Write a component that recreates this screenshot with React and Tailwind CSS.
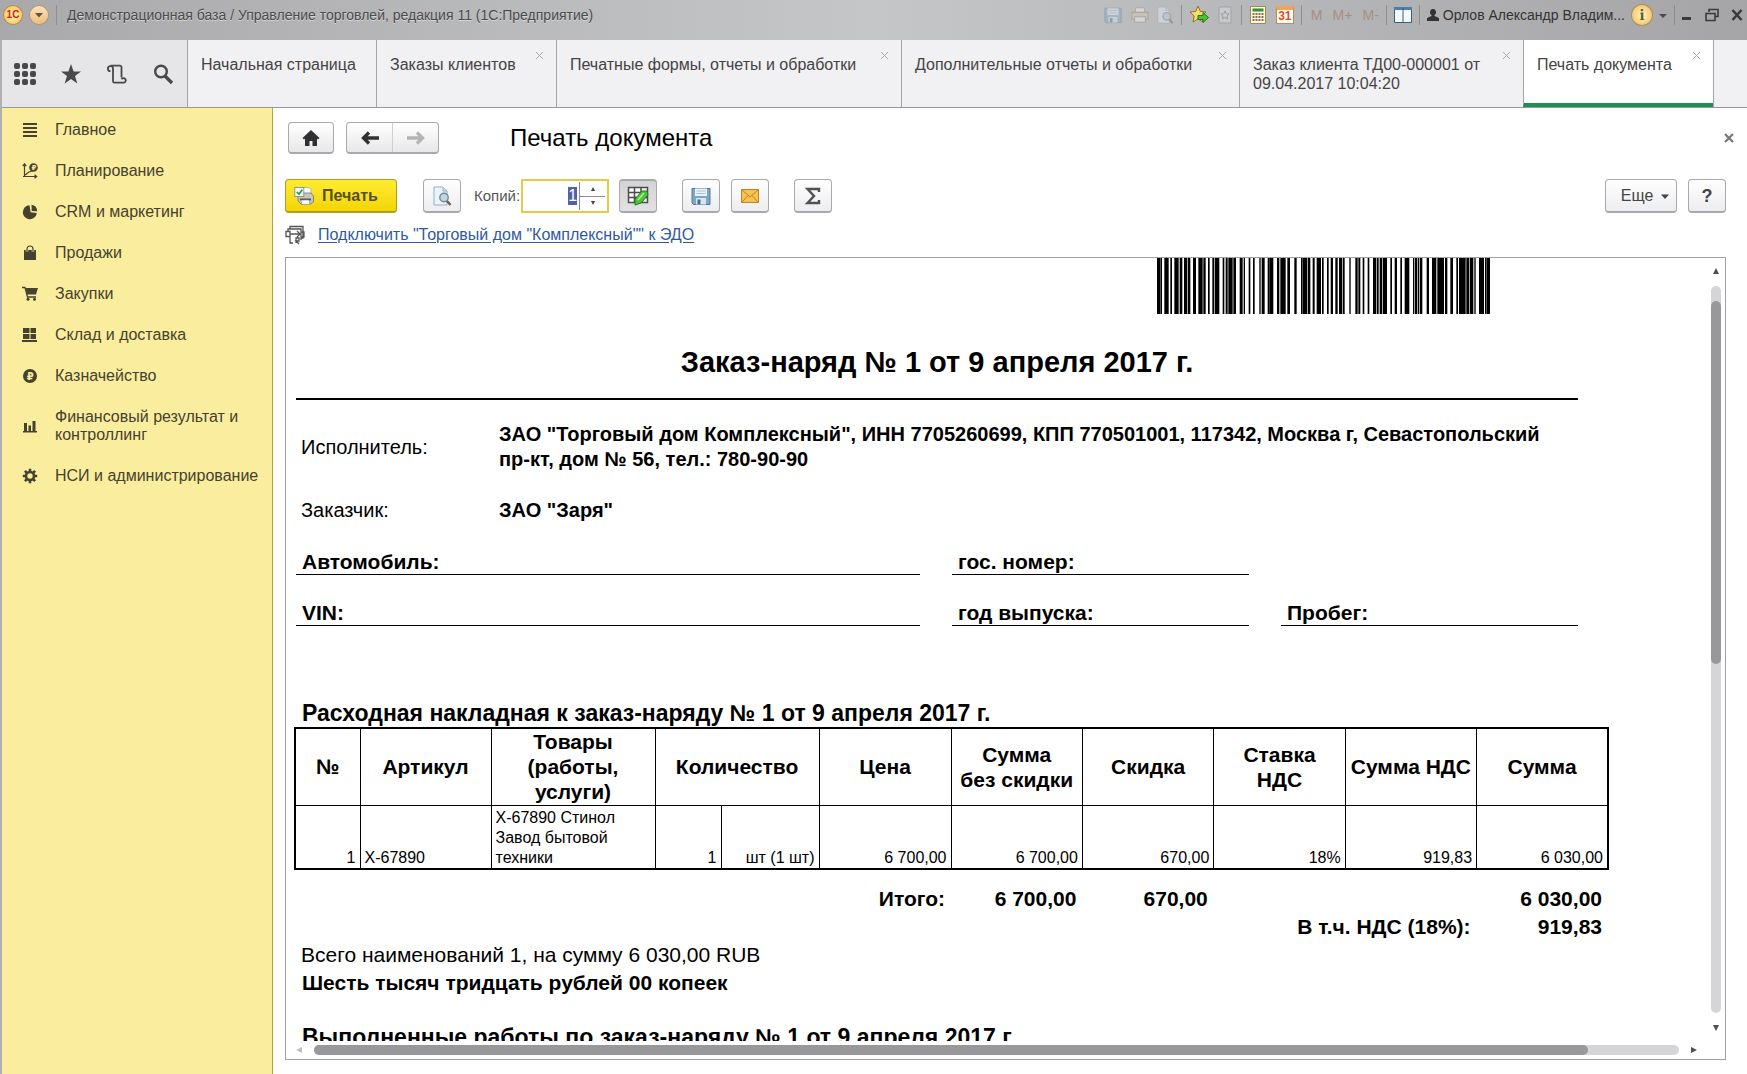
import React, { useEffect, useRef } from 'react';

const tabs = [
  { title: 'Начальная страница', width: 'w-[189px]' },
  { title: 'Заказы клиентов', width: 'w-[180px]', closable: true },
  { title: 'Печатные формы, отчеты и обработки', width: 'w-[345px]', closable: true },
  { title: 'Дополнительные отчеты и обработки', width: 'w-[338px]', closable: true },
  { title: 'Заказ клиента ТД00-000001 от 09.04.2017 10:04:20', width: 'w-[284px]', closable: true },
  { title: 'Печать документа', width: 'w-[190px]', closable: true, active: true },
];

// [start, end] of every bar, in thirds of a pixel
const bars = [
  [0, 8], [10, 14], [22, 34], [40, 44], [52, 64], [68, 75], [81, 90], [93, 99], [108, 116], [124, 136],
  [139, 145], [153, 157], [166, 170], [173, 186], [197, 201], [206, 211], [214, 226], [229, 236], [248, 256],
  [260, 263], [275, 279], [288, 292], [307, 310], [314, 322], [332, 336], [337, 348], [360, 366], [370, 385],
  [391, 398], [412, 418], [432, 436], [438, 450], [453, 459], [467, 472], [479, 491], [495, 499], [510, 514],
  [521, 527], [535, 541], [546, 554], [557, 562], [577, 580], [595, 601], [604, 609], [617, 621], [632, 636],
  [648, 656], [659, 664], [668, 675], [678, 689], [700, 704], [713, 719], [730, 734], [743, 756], [768, 771],
  [774, 780], [783, 786], [789, 795], [809, 815], [825, 837], [841, 860], [864, 870], [880, 887], [898, 902],
  [906, 925], [928, 936], [939, 948], [952, 955], [966, 980], [984, 988], [990, 998],
];

const columns = [
  { title: '№', span: 1 },
  { title: 'Артикул', span: 1 },
  { title: 'Товары (работы, услуги)', span: 1 },
  { title: 'Количество', span: 2 },
  { title: 'Цена', span: 1 },
  { title: 'Сумма без\u00a0скидки', span: 1 },
  { title: 'Скидка', span: 1 },
  { title: 'Ставка НДС', span: 1 },
  { title: 'Сумма НДС', span: 1 },
  { title: 'Сумма', span: 1 },
];

const rows = [
  ['1', 'X-67890', 'X-67890 Стинол Завод бытовой техники', '1', 'шт (1 шт)', '6 700,00', '6 700,00', '670,00', '18%', '919,83', '6 030,00'],
];

const Icon = ({ children, className = 'size-4', box = '0 0 16 16' }) => (
  <svg viewBox={box} className={`shrink-0 ${className}`} fill="currentColor" aria-hidden="true">
    {children}
  </svg>
);

const FloppyIcon = ({ className }) => (
  <Icon className={className} box="0 0 20 20">
    <path d="M1 2.5h18v16H2.5L1 17z" fill="#7fa6c4" stroke="#4f7d9e" />
    <rect x="4" y="2.5" width="12" height="7.500" fill="#eaf3fa" />
    <path d="M5.500 5h9M5.500 7.500h9" stroke="#a9c3d6" />
    <rect x="5" y="12" width="10" height="6.500" fill="#d7e6f1" />
    <rect x="6.500" y="13.500" width="3" height="5" fill="#4c6f8c" />
  </Icon>
);

const PrinterIcon = ({ className }) => (
  <Icon className={className} box="0 0 20 20">
    <path d="M8 1.500h7l2 2V9H8z" fill="#fff" stroke="#a8a8a0" strokeWidth=".8" />
    <path d="M4 9l3-2h10l2.500 3v6L16 18H7l-3-3z" fill="#c9c6bb" stroke="#77746a" strokeWidth=".8" />
    <path d="M6 12.500h11v2H6z" fill="#57544c" />
    <path d="M7 14h8l1 4.500H8z" fill="#fff" stroke="#888" strokeWidth=".6" />
    <rect x=".8" y="1.500" width="9" height="9" fill="#f4fbf4" stroke="#7c93a0" strokeWidth=".9" />
    <path d="M2.800 6l2.200 2.200L8.200 3.800" fill="none" stroke="#2f9a3b" strokeWidth="1.700" />
  </Icon>
);

const PreviewIcon = ({ className }) => (
  <Icon className={className} box="0 0 20 20">
    <path d="M2 1h9l4 4v14H2z" fill="#eaf3fa" stroke="#8fb1c8" />
    <path d="M11 1v4h4" fill="#cfe0ec" stroke="#8fb1c8" />
    <circle cx="12" cy="11.500" r="4.200" fill="#bcd7ea" stroke="#7d8791" strokeWidth="1.400" />
    <path d="M15 15l3.500 4" stroke="#7a5a3c" strokeWidth="2.400" />
  </Icon>
);

const menu = [
  {
    title: 'Главное',
    icon: <Icon><path d="M1 1h14v2H1zM1 5h14v2H1zM1 9h14v2H1zM1 13h14v2H1z" /></Icon>,
  },
  {
    title: 'Планирование',
    icon: (
      <Icon>
        <path d="M2.500 1v13M1 13.500h13M.7 3.200L2.500.8l1.800 2.400M12.500 11.700l2.200 1.800-2.200 1.800M3 12l4-3 3-1 3-2" fill="none" stroke="currentColor" strokeWidth="1.200" />
        <circle cx="11.500" cy="4.500" r="4.300" />
        <text x="9.400" y="7.300" fontSize="7" fill="#fbed9e" fontFamily="DejaVu Sans" fontWeight="bold">₽</text>
      </Icon>
    ),
  },
  {
    title: 'CRM и маркетинг',
    icon: <Icon><path d="M7.500 1.200A7 7 0 1 0 14.800 9L8.600 8.300z" /><path d="M9.500.8l.2 6.200 5.500.3A6.700 6.700 0 0 0 9.500.8z" /></Icon>,
  },
  {
    title: 'Продажи',
    icon: (
      <Icon>
        <path d="M2 5h12v10H2z" />
        <path d="M5 7V4a3 3 0 0 1 6 0v3" fill="none" stroke="#fbed9e" strokeWidth="2.400" />
        <path d="M5 7V4a3 3 0 0 1 6 0v3" fill="none" stroke="currentColor" strokeWidth="1.200" />
      </Icon>
    ),
  },
  {
    title: 'Закупки',
    icon: (
      <Icon>
        <path d="M3.500 2H16l-2 6.500H5.200z" />
        <path d="M0 1.500h3l2.500 9.500H14" fill="none" stroke="currentColor" strokeWidth="1.300" />
        <circle cx="6" cy="13.300" r="1.500" /><circle cx="12.500" cy="13.300" r="1.500" />
      </Icon>
    ),
  },
  {
    title: 'Склад и доставка',
    icon: <Icon><path d="M1 1h6.500v5H1zM8.500 1H14v5H8.500zM1 7h6.500v5H1zM8.500 7H14v5H8.500zM0 13h15v2H0z" /></Icon>,
  },
  {
    title: 'Казначейство',
    icon: (
      <Icon>
        <circle cx="8" cy="8" r="7" />
        <text x="4.800" y="11.800" fontSize="10" fill="#fbed9e" fontFamily="DejaVu Sans" fontWeight="bold">₽</text>
      </Icon>
    ),
  },
  {
    title: 'Финансовый результат и контроллинг',
    icon: <Icon><path d="M2 5h3v8H2zM6.500 7.500h2.500V13H6.500zM10.500 3h3v10h-3zM1 13h14v1.500H1z" /></Icon>,
  },
  {
    title: 'НСИ и администрирование',
    icon: (
      <Icon>
        <circle cx="8" cy="8" r="4" fill="none" stroke="currentColor" strokeWidth="2.600" />
        <path d="M8 .8v3M8 12.200v3M.8 8h3M12.200 8h3M2.900 2.900l2 2M11.100 11.100l2 2M2.900 13.100l2-2M11.100 4.900l2-2" stroke="currentColor" strokeWidth="2.600" />
      </Icon>
    ),
  },
];

const Divider = () => <span className="h-5 w-px bg-[#8f8f91]" />;

const TitleBar = () => (
  <header className="flex h-10 items-start bg-linear-to-r from-[#a9a9ab] via-[#c5c6c8] to-[#a5a5a7] pt-[3px] text-sm text-[#4a4a4c]">
    <div className="flex h-6 items-center gap-2 pl-1">
      <button aria-label="1С" className="flex size-[18px] items-center justify-center rounded-full bg-radial from-[#fff3b0] to-[#f6bf3a] text-[10px] font-bold text-[#d3201c] ring-1 ring-[#b98a4a]">1С</button>
      <button aria-label="Меню" className="flex size-[18px] items-center justify-center rounded-full bg-linear-to-b from-[#fbe3c0] to-[#eebc7e] text-[#6b5130] ring-1 ring-[#b99468]">
        <Icon className="size-2.5" box="0 0 10 10"><path d="M1 3h8L5 7.500z" /></Icon>
      </button>
      <Divider />
    </div>
    <h1 className="ml-2.5 flex h-6 min-w-0 flex-1 items-center truncate text-shadow-[0_1px_0_#d6d6d8]">
      Демонстрационная база / Управление торговлей, редакция 11 (1С:Предприятие)
    </h1>
    <div className="flex h-6 items-center gap-[7px]">
      <button aria-label="Сохранить" className="opacity-40"><FloppyIcon className="size-[18px]" /></button>
      <button aria-label="Печать" className="ml-0.5 opacity-40">
        <Icon className="size-[18px]" box="0 0 20 20">
          <path d="M5 2h10v5H5z" fill="#fff" stroke="#a08c70" />
          <path d="M1 7h18v8H1z" fill="#dcc9a8" stroke="#8e7858" />
          <path d="M4 12h12v6H4z" fill="#fff" stroke="#8e7858" />
        </Icon>
      </button>
      <button aria-label="Просмотр" className="opacity-40"><PreviewIcon className="size-[18px]" /></button>
      <Divider />
      <button aria-label="В избранное">
        <Icon className="size-5" box="0 0 20 20">
          <path d="M9 1l2.300 5.400 5.700.6-4.300 4 1.300 6L9 13.900 4 17l1.200-6L1 7l5.700-.6z" fill="#f8dc6a" stroke="#8d7422" />
          <path d="M9 10.500h5V7.500l5.500 5-5.500 5v-3H9z" fill="#4fbd35" stroke="#23741a" />
        </Icon>
      </button>
      <button aria-label="Избранное" className="opacity-40">
        <Icon className="size-[18px]" box="0 0 18 18">
          <path d="M3 1h12v16H3z" fill="#e2e4e6" stroke="#7c868d" />
          <path d="M9 5l1.200 2.700 3 .3-2.200 2 .6 3L9 11.500 6.400 13 7 10 4.800 8l3-.3z" fill="none" stroke="#6a747b" />
        </Icon>
      </button>
      <Divider />
      <button aria-label="Калькулятор">
        <Icon className="size-[18px]" box="0 0 18 18">
          <path d="M1.500.5h15v17h-15z" fill="#fdf6dc" stroke="#a08a50" />
          <path d="M3.500 2.500h11v3h-11z" fill="#35913c" />
          <path d="M3.500 8h11M3.500 11h11M3.500 14h11" stroke="#5b4a30" strokeWidth="1.600" strokeDasharray="2 1" />
        </Icon>
      </button>
      <button aria-label="Календарь" className="ml-0.5 flex h-[18px] w-[18px] flex-col items-center border border-[#c08a58] border-t-4 border-t-[#f0a45c] bg-[#fffdf6] text-[12px] leading-[13px] font-bold text-[#e0501c]">
        31
      </button>
      <Divider />
      <div className="flex w-[70px] justify-between pl-0.5 text-[#a8907f]">
        <button>M</button>
        <button>M+</button>
        <button>M-</button>
      </div>
      <Divider />
      <button aria-label="Панели">
        <Icon className="size-[18px]" box="0 0 18 18">
          <path d="M.5 1.500h17v15H.5z" fill="#f4f9fd" stroke="#35607f" />
          <path d="M0 1h18v3H0z" fill="#4b80a8" />
          <path d="M9 2v15" stroke="#35607f" />
        </Icon>
      </button>
      <Divider />
      <button className="flex items-center gap-1 text-[#333]">
        <Icon className="size-3" box="0 0 12 12">
          <path d="M6 0a3 3.200 0 0 1 1.500 6v1L12 9v3H0V9l4.500-2V6A3 3.200 0 0 1 6 0z" />
        </Icon>
        Орлов Александр Владим...
      </button>
      <button aria-label="О программе" className="flex size-5 items-center justify-center rounded-full bg-radial from-[#fff6c8] to-[#f0b640] font-serif text-base leading-4 font-bold text-[#5c5c2c] ring-1 ring-[#b08d50]">i</button>
      <button aria-label="Еще"><Icon className="size-2" box="0 0 8 8"><path d="M0 3h8L4 7z" /></Icon></button>
      <Divider />
    </div>
    <div className="flex h-6 items-center gap-3 pr-1 pl-1.5 text-[#3a3a3c]">
      <button aria-label="Свернуть"><Icon className="size-3" box="0 0 12 12"><path d="M1 8h9v3H1z" /></Icon></button>
      <button aria-label="Восстановить">
        <Icon className="size-3.5" box="0 0 14 14">
          <path d="M4 4V1.500h9v7h-3M1 5.500h9v7H1z" fill="none" stroke="currentColor" strokeWidth="1.600" />
        </Icon>
      </button>
      <button aria-label="Закрыть">
        <Icon className="size-3" box="0 0 12 12"><path d="M1.500 1l9 10M10.500 1l-9 10" stroke="currentColor" strokeWidth="2.600" /></Icon>
      </button>
    </div>
  </header>
);

const TabBar = () => (
  <nav className="flex h-[68px] border-b border-[#98989a] bg-[#f1f0f2] text-[#444]">
    <div className="flex w-[185px] shrink-0 items-center justify-between bg-[#e6e5e8] pr-[13px] pl-3 text-[#48484a]">
      <button aria-label="Меню функций">
        <Icon className="size-[22px]" box="0 0 22 22">
          {[0, 1, 2].map((r) => [0, 1, 2].map((c) => (
            <rect key={`${r}${c}`} x={c * 8} y={r * 8} width="6" height="6" rx="2" />
          )))}
        </Icon>
      </button>
      <button aria-label="Избранное">
        <Icon className="size-[22px]" box="0 0 22 22"><path d="M11 1l2.600 7.400h7.400l-6 4.600 2.300 7.500L11 16l-6.300 4.500L7 13 1 8.400h7.400z" /></Icon>
      </button>
      <button aria-label="История">
        <Icon className="size-[22px]" box="0 0 22 22">
          <path d="M4.500 8.200a2.600 2.600 0 1 1 2.500-3.300V18.500M4.500 2.600h9.500a1.500 1.500 0 0 1 1.500 1.500V14.500M7 18.300a1.500 1.500 0 0 0 1.500 1.400H18a2.300 2.300 0 1 0-2.500-3.400" fill="none" stroke="currentColor" strokeWidth="1.800" />
        </Icon>
      </button>
      <button aria-label="Поиск">
        <Icon className="size-[22px]" box="0 0 22 22">
          <circle cx="9" cy="8.500" r="5.800" fill="none" stroke="currentColor" strokeWidth="2.400" />
          <path d="M13 13l7 7" stroke="currentColor" strokeWidth="3.400" />
        </Icon>
      </button>
    </div>
    {tabs.map((tab) => (
      <div
        key={tab.title}
        className={`flex shrink-0 items-start justify-between border-l border-[#a4a4a6] pt-[15px] pl-[13px] ${tab.width} ${tab.active ? 'border-b-4 border-b-[#1f8f56] bg-white' : ''}`}
      >
        <a href="#" className="flex-1 leading-[19px]">{tab.title}</a>
        {tab.closable && (
          <button aria-label="Закрыть вкладку" className="mr-3 -mt-1 text-[#a8a8aa]">
            <Icon className="size-[9px]" box="0 0 9 9"><path d="M1 1l7 7M8 1L1 8" stroke="currentColor" /></Icon>
          </button>
        )}
      </div>
    ))}
    <div className="border-l border-[#a4a4a6]" />
  </nav>
);

const Sidebar = () => (
  <aside className="w-[271px] shrink-0 border-r border-[#b3a93f] bg-[#fbed9e] pt-[13px]">
    <ul className="flex flex-col gap-[23px]">
      {menu.map((item) => (
        <li key={item.title}>
          <a href="#" className="flex items-center gap-[17px] pr-3 pl-5 leading-[18px] text-[#45422f]">
            {item.icon}
            <span>{item.title}</span>
          </a>
        </li>
      ))}
    </ul>
  </aside>
);

const ToolButton = ({ label, children, className = 'w-[38px] h-[34px] from-white to-[#ededf0]' }) => (
  <button
    aria-label={label}
    className={`flex items-center justify-center rounded border border-[#a9a9ad] border-b-2 bg-linear-to-b text-[#444] ${className}`}
  >
    {children}
  </button>
);

const Toolbar = () => {
  const copies = useRef(null);

  useEffect(() => {
    copies.current.focus();
    copies.current.select();
  }, []);

  return (
    <div className="mt-[25px] flex items-center">
      <button className="flex h-[34px] w-28 items-center gap-2 rounded border border-b-2 border-[#b09c20] bg-linear-to-b from-[#ffec2e] to-[#f3d500] pl-2 font-bold text-[#57501a]">
        <PrinterIcon className="size-5" />
        Печать
      </button>
      <div className="ml-[26px] flex items-center">
        <ToolButton label="Предварительный просмотр"><PreviewIcon className="size-5" /></ToolButton>
        <label htmlFor="copies" className="ml-[13px] text-[15px] text-[#555]">Копий:</label>
        <div className="ml-px flex h-[34px] w-[88px] items-center border-2 border-[#e6cb4a] bg-white pr-0.5">
          <input
            id="copies"
            ref={copies}
            defaultValue="1"
            className="h-7 w-0 flex-1 pr-0.5 text-right outline-none selection:bg-[#5161a8] selection:text-white"
          />
          <div className="flex h-7 w-[26px] flex-col border-l border-[#8c8c90] text-[#444]">
            <button aria-label="Больше" className="flex flex-1 items-center justify-center border-b border-[#8c8c90]">
              <Icon className="size-1" box="0 0 4 4"><path d="M0 4h4L2 0z" /></Icon>
            </button>
            <button aria-label="Меньше" className="flex flex-1 items-center justify-center">
              <Icon className="size-1" box="0 0 4 4"><path d="M0 0h4L2 4z" /></Icon>
            </button>
          </div>
        </div>
      </div>
      <div className="ml-2.5 flex items-center">
        <ToolButton label="Редактирование" className="h-[34px] w-[38px] border-t-2 from-[#d4d4d6] to-[#e2e2e4]">
          <Icon className="size-[22px]" box="0 0 22 22">
            <path d="M1.500 2.500h19v15h-19zM1.500 7.500h19M1.500 12.500h19M7.500 2.500v15M14 2.500v15" fill="#fafafa" stroke="#4c4c4e" strokeWidth="1.500" />
            <path d="M8 14l7-8h5l1 4-7 8-6 2z" fill="#4cc436" stroke="#1d7f1c" />
            <path d="M11 15l6-7" stroke="#b9f09c" strokeWidth="1.500" />
          </Icon>
        </ToolButton>
        <span className="w-[25px]" />
        <ToolButton label="Сохранить"><FloppyIcon className="size-5" /></ToolButton>
        <span className="w-[11px]" />
        <ToolButton label="Отправить">
          <Icon className="h-3.5 w-[18px]" box="0 0 18 14">
            <path d="M.5.5h17v13H.5z" fill="#f6c250" stroke="#bd8420" />
            <path d="M1 1l8 7 8-7M1 13l6-6.500M17 13l-6-6.500" fill="none" stroke="#bd8420" />
          </Icon>
        </ToolButton>
        <span className="w-[25px]" />
        <ToolButton label="Сумма">
          <Icon className="size-[18px]" box="0 0 18 18">
            <path d="M15 5V2H3.500L10 9l-6.500 7H15v-3" fill="none" stroke="#505052" strokeWidth="2.400" />
          </Icon>
        </ToolButton>
      </div>
      <div className="ml-auto flex items-center gap-[11px]">
        <ToolButton label="Еще" className="h-[34px] w-[72px] gap-2 from-white to-[#ededf0] pl-2">
          Еще
          <Icon className="size-2" box="0 0 8 8"><path d="M0 2.500h8L4 7z" /></Icon>
        </ToolButton>
        <ToolButton label="Справка"><span className="text-lg font-bold">?</span></ToolButton>
      </div>
    </div>
  );
};

const Field = ({ label }) => (
  <div className="border-b border-black pl-1.5 text-[21px] leading-[25px] font-bold">{label}</div>
);

const Party = ({ label, children }) => (
  <div className="flex items-center pr-5 pl-[5px]">
    <span className="w-[198px] shrink-0">{label}</span>
    <b>{children}</b>
  </div>
);

const InvoiceTable = () => (
  <table className="-ml-0.5 w-[1315px] table-fixed border-collapse text-[21px] leading-[25px]">
    <colgroup>
      <col className="w-[65px]" />
      <col className="w-[131px]" />
      <col className="w-[164px]" />
      <col className="w-[66px]" />
      <col className="w-[98px]" />
      <col className="w-[132px]" />
      <col span={5} />
    </colgroup>
    <thead className="border-2 border-b border-black">
      <tr>
        {columns.map((column) => (
          <th key={column.title} colSpan={column.span} className="border border-black px-1 pt-0 pb-px">{column.title}</th>
        ))}
      </tr>
    </thead>
    <tbody className="border-2 border-t border-black text-base leading-5">
      {rows.map((row) => (
        <tr key={row[0]}>
          {row.map((value, i) => (
            <td key={i} className={`border border-black px-1 pt-0.5 pb-0 align-bottom ${i === 1 || i === 2 ? 'text-left' : 'text-right'}`}>
              {value}
            </td>
          ))}
        </tr>
      ))}
    </tbody>
    <tfoot className="text-right font-bold">
      <tr>
        <td colSpan={6} className="pt-4 pr-1.5">Итого:</td>
        <td className="pt-4 pr-1.5">6 700,00</td>
        <td className="pt-4 pr-1.5">670,00</td>
        <td colSpan={3} className="pt-4 pr-1.5">6 030,00</td>
      </tr>
      <tr>
        <td colSpan={10} className="pt-[3px] pr-1.5">В т.ч. НДС (18%):</td>
        <td className="pt-[3px] pr-1.5">919,83</td>
      </tr>
    </tfoot>
  </table>
);

const Sheet = () => (
  <article className="w-[1330px] pl-2.5 text-xl leading-[25px] text-black">
    <svg viewBox="0 0 999 168" className="ml-[861px] h-14 w-[333px]" preserveAspectRatio="none" role="img" aria-label="Штрихкод">
      {bars.map(([from, to]) => <rect key={from} x={from} y="0" width={to - from + 1} height="168" />)}
    </svg>
    <h2 className="mt-8 w-[1282px] text-center text-[29px] leading-8 font-bold">Заказ-наряд № 1 от 9 апреля 2017 г.</h2>
    <hr className="mt-5 w-[1282px] border-t-2 border-black" />
    <div className="mt-[22px] flex w-[1282px] flex-col gap-[26px]">
      <Party label="Исполнитель:">
        ЗАО "Торговый дом Комплексный", ИНН 7705260699, КПП 770501001, 117342, Москва г, Севастопольский пр-кт, дом № 56, тел.: 780-90-90
      </Party>
      <Party label="Заказчик:">ЗАО "Заря"</Party>
      <div className="grid grid-cols-[624px_297px_297px] gap-x-8 gap-y-[25px]">
        <Field label="Автомобиль:" />
        <Field label="гос. номер:" />
        <span />
        <Field label="VIN:" />
        <Field label="год выпуска:" />
        <Field label="Пробег:" />
      </div>
    </div>
    <h3 className="mt-[73px] pl-1.5 text-[23px] leading-7 font-bold">Расходная накладная к заказ-наряду № 1 от 9 апреля 2017 г.</h3>
    <InvoiceTable />
    <div className="mt-[3px] flex flex-col gap-[3px] text-[21px] leading-[25px]">
      <p className="pl-[5px]">Всего наименований 1, на сумму 6 030,00 RUB</p>
      <p className="pl-1.5 font-bold">Шесть тысяч тридцать рублей 00 копеек</p>
    </div>
    <h3 className="mt-7 pl-1.5 text-[23px] leading-7 font-bold">Выполненные работы по заказ-наряду № 1 от 9 апреля 2017 г.</h3>
  </article>
);

const Viewer = () => (
  <section className="mt-3 mb-3.5 flex min-h-0 flex-1 flex-col border border-[#a0a0a4] bg-white">
    <div className="flex min-h-0 flex-1">
      <div className="min-w-0 flex-1 overflow-hidden">
        <Sheet />
      </div>
      <div className="flex w-[18px] flex-col items-center pt-2.5 pb-2.5 text-[#505052]">
        <Icon className="size-1.5" box="0 0 6 6"><path d="M0 6h6L3 0z" /></Icon>
        <div className="my-3 w-2.5 flex-1 rounded-full bg-[#d5d5d7] pt-[15px]">
          <div className="h-[51%] rounded-full bg-[#98989a]" />
        </div>
        <Icon className="size-1.5" box="0 0 6 6"><path d="M0 0h6L3 6z" /></Icon>
      </div>
    </div>
    <div className="flex h-[18px] items-center gap-3 pr-7 pl-2.5 text-[#505052]">
      <Icon className="size-1.5 text-[#c0c0c2]" box="0 0 6 6"><path d="M6 0v6L0 3z" /></Icon>
      <div className="h-2.5 flex-1 rounded-full bg-[#d5d5d7]">
        <div className="h-full w-14/15 rounded-full bg-[#98989a]" />
      </div>
      <Icon className="size-1.5" box="0 0 6 6"><path d="M0 0v6l6-3z" /></Icon>
    </div>
  </section>
);

const App = () => (
  <div className="flex h-screen flex-col overflow-hidden bg-white font-['Liberation_Sans',Arial,sans-serif] text-base">
    <TitleBar />
    <div className="flex min-h-0 flex-1 flex-col border-l-2 border-[#b0b0b0]">
      <TabBar />
      <div className="flex min-h-0 flex-1">
        <Sidebar />
        <main className="flex min-w-0 flex-1 flex-col pt-3.5 pr-[21px] pl-3">
          <div className="flex items-center pl-[3px]">
            <ToolButton label="Домой" className="h-8 w-[46px] from-white to-[#e8e8ea]">
              <Icon className="size-[18px] text-[#303032]" box="0 0 18 18"><path d="M9 1l8.500 8-1.500 1.500-1-.9V17h-4.500v-5h-3v5H3V9.600l-1 .9L.5 9z" /></Icon>
            </ToolButton>
            <div className="ml-3 flex h-8 w-[93px] overflow-hidden rounded border border-b-2 border-[#a9a9ad] bg-linear-to-b from-white to-[#e8e8ea]">
              <button aria-label="Назад" className="flex flex-1 items-center justify-center border-r border-[#cfcfd2] text-[#303032]">
                <Icon className="size-[18px]" box="0 0 18 18"><path d="M18 9H3M8 3.500L2.500 9 8 14.500" fill="none" stroke="currentColor" strokeWidth="3.300" /></Icon>
              </button>
              <button aria-label="Вперед" className="flex flex-1 items-center justify-center text-[#b4b4b6]">
                <Icon className="size-[18px]" box="0 0 18 18"><path d="M0 9H15M10 3.500L15.500 9 10 14.500" fill="none" stroke="currentColor" strokeWidth="3.300" /></Icon>
              </button>
            </div>
            <h2 className="ml-[71px] flex-1 text-2xl leading-8 text-black">Печать документа</h2>
            <button aria-label="Закрыть" className="-mr-2 text-[#77777a]">
              <Icon className="size-2.5" box="0 0 10 10"><path d="M1 1l8 8M9 1L1 9" stroke="currentColor" strokeWidth="2.200" /></Icon>
            </button>
          </div>
          <Toolbar />
          <div className="mt-3 flex h-5 items-center gap-[13px]">
            <Icon className="size-5 text-[#555]" box="0 0 20 20">
              <path d="M5 4V1.500h13V13h-2M3 7V4h13v11M1 6.500h4v5H1zM5 9h10M12 6l3 3-3 3M5 12v6h3M16 7h3v5h-3M11 18v-5h3v3h-3l3 3" fill="none" stroke="currentColor" strokeWidth="1.300" />
            </Icon>
            <a href="#" className="text-[#2f5a9e] underline underline-offset-2">Подключить "Торговый дом "Комплексный"" к ЭДО</a>
          </div>
          <Viewer />
        </main>
      </div>
    </div>
  </div>
);

export default App;
